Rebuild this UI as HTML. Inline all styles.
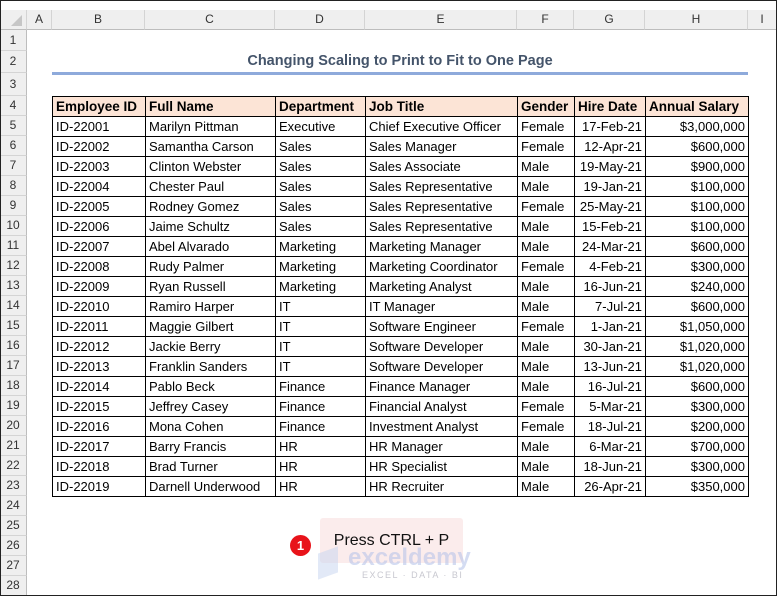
<!DOCTYPE html>
<html><head><style>
*{margin:0;padding:0;box-sizing:border-box}
body{width:777px;height:596px;background:#fff;font-family:"Liberation Sans",sans-serif;position:relative;overflow:hidden}
.frame{position:absolute;left:0;top:0;width:777px;height:596px;border:1px solid #222}
.ch{position:absolute;top:10px;height:20px;background:#efefef;border-right:1px solid #d4d4d4;border-bottom:1px solid #bdbdbd;font-size:12px;color:#333;text-align:center;line-height:19px}
.rh{position:absolute;left:0;width:27px;background:#efefef;border-bottom:1px solid #d4d4d4;border-right:1px solid #bdbdbd;font-size:12px;color:#333;text-align:center}
table{position:absolute;left:52px;top:96px;border-collapse:collapse;font-size:13px;color:#000}
td{border:1px solid #000;height:20px;padding:0 3px;white-space:nowrap;line-height:18px}
tr.h td{background:#fce4d6;font-weight:bold;font-size:13.5px}
td.r{text-align:right}
</style></head><body>
<div class="ch" style="left:0;width:27px"><svg width="27" height="19"><polygon points="22,5 22,16 11,16" fill="#c6c6c6"/></svg></div>
<div class="ch" style="left:27px;width:25px">A</div>
<div class="ch" style="left:52px;width:93px">B</div>
<div class="ch" style="left:145px;width:130px">C</div>
<div class="ch" style="left:275px;width:90px">D</div>
<div class="ch" style="left:365px;width:152px">E</div>
<div class="ch" style="left:517px;width:57px">F</div>
<div class="ch" style="left:574px;width:71px">G</div>
<div class="ch" style="left:645px;width:103px">H</div>
<div class="ch" style="left:748px;width:29px">I</div>
<div class="rh" style="top:30px;height:21px;line-height:20px">1</div>
<div class="rh" style="top:51px;height:22px;line-height:21px">2</div>
<div class="rh" style="top:73px;height:23px;line-height:22px">3</div>
<div id="rows"></div>
<script>
var h='';for(var i=4;i<=28;i++){var t=96+(i-4)*20;h+='<div class="rh" style="top:'+t+'px;height:20px;line-height:19px">'+i+'</div>';}
document.getElementById('rows').innerHTML=h;
</script>
<div style="position:absolute;left:52px;top:51px;width:696px;text-align:center;font-weight:bold;font-size:14.5px;color:#44546a;line-height:20px">Changing Scaling to Print to Fit to One Page</div>
<div style="position:absolute;left:52px;top:72px;width:696px;height:3px;background:#8eaadb"></div>
<table>
<colgroup><col style="width:93px"><col style="width:130px"><col style="width:90px"><col style="width:152px"><col style="width:57px"><col style="width:71px"><col style="width:103px"></colgroup>
<tr class="h"><td>Employee ID</td><td>Full Name</td><td>Department</td><td>Job Title</td><td>Gender</td><td>Hire Date</td><td>Annual Salary</td></tr>
<tr><td>ID-22001</td><td>Marilyn Pittman</td><td>Executive</td><td>Chief Executive Officer</td><td>Female</td><td class="r">17-Feb-21</td><td class="r">$3,000,000</td></tr>
<tr><td>ID-22002</td><td>Samantha Carson</td><td>Sales</td><td>Sales Manager</td><td>Female</td><td class="r">12-Apr-21</td><td class="r">$600,000</td></tr>
<tr><td>ID-22003</td><td>Clinton Webster</td><td>Sales</td><td>Sales Associate</td><td>Male</td><td class="r">19-May-21</td><td class="r">$900,000</td></tr>
<tr><td>ID-22004</td><td>Chester Paul</td><td>Sales</td><td>Sales Representative</td><td>Male</td><td class="r">19-Jan-21</td><td class="r">$100,000</td></tr>
<tr><td>ID-22005</td><td>Rodney Gomez</td><td>Sales</td><td>Sales Representative</td><td>Female</td><td class="r">25-May-21</td><td class="r">$100,000</td></tr>
<tr><td>ID-22006</td><td>Jaime Schultz</td><td>Sales</td><td>Sales Representative</td><td>Male</td><td class="r">15-Feb-21</td><td class="r">$100,000</td></tr>
<tr><td>ID-22007</td><td>Abel Alvarado</td><td>Marketing</td><td>Marketing Manager</td><td>Male</td><td class="r">24-Mar-21</td><td class="r">$600,000</td></tr>
<tr><td>ID-22008</td><td>Rudy Palmer</td><td>Marketing</td><td>Marketing Coordinator</td><td>Female</td><td class="r">4-Feb-21</td><td class="r">$300,000</td></tr>
<tr><td>ID-22009</td><td>Ryan Russell</td><td>Marketing</td><td>Marketing Analyst</td><td>Male</td><td class="r">16-Jun-21</td><td class="r">$240,000</td></tr>
<tr><td>ID-22010</td><td>Ramiro Harper</td><td>IT</td><td>IT Manager</td><td>Male</td><td class="r">7-Jul-21</td><td class="r">$600,000</td></tr>
<tr><td>ID-22011</td><td>Maggie Gilbert</td><td>IT</td><td>Software Engineer</td><td>Female</td><td class="r">1-Jan-21</td><td class="r">$1,050,000</td></tr>
<tr><td>ID-22012</td><td>Jackie Berry</td><td>IT</td><td>Software Developer</td><td>Male</td><td class="r">30-Jan-21</td><td class="r">$1,020,000</td></tr>
<tr><td>ID-22013</td><td>Franklin Sanders</td><td>IT</td><td>Software Developer</td><td>Male</td><td class="r">13-Jun-21</td><td class="r">$1,020,000</td></tr>
<tr><td>ID-22014</td><td>Pablo Beck</td><td>Finance</td><td>Finance Manager</td><td>Male</td><td class="r">16-Jul-21</td><td class="r">$600,000</td></tr>
<tr><td>ID-22015</td><td>Jeffrey Casey</td><td>Finance</td><td>Financial Analyst</td><td>Female</td><td class="r">5-Mar-21</td><td class="r">$300,000</td></tr>
<tr><td>ID-22016</td><td>Mona Cohen</td><td>Finance</td><td>Investment Analyst</td><td>Female</td><td class="r">18-Jul-21</td><td class="r">$200,000</td></tr>
<tr><td>ID-22017</td><td>Barry Francis</td><td>HR</td><td>HR Manager</td><td>Male</td><td class="r">6-Mar-21</td><td class="r">$700,000</td></tr>
<tr><td>ID-22018</td><td>Brad Turner</td><td>HR</td><td>HR Specialist</td><td>Male</td><td class="r">18-Jun-21</td><td class="r">$300,000</td></tr>
<tr><td>ID-22019</td><td>Darnell Underwood</td><td>HR</td><td>HR Recruiter</td><td>Male</td><td class="r">26-Apr-21</td><td class="r">$350,000</td></tr>
</table>
<div style="position:absolute;left:320px;top:518px;width:143px;height:45px;background:#fbecec;border-radius:3px;text-align:center;line-height:46px;font-size:16px;color:#111">Press CTRL + P</div>
<div style="position:absolute;left:290px;top:535px;width:21px;height:21px;border-radius:50%;background:#e8131a;color:#fff;font-weight:bold;font-size:13px;text-align:center;line-height:21px">1</div>
<div style="position:absolute;left:318px;top:550px;width:20px;height:26px;background:#c6d3ef;opacity:.5;transform:skewY(-20deg)"></div>
<div style="position:absolute;left:348px;top:545px;font-size:24px;font-weight:bold;color:#b9c5ea;opacity:.6;line-height:26px">exceldemy</div>
<div style="position:absolute;left:362px;top:570px;font-size:9px;color:#c8c8d0;letter-spacing:1.5px">EXCEL · DATA · BI</div>
<div class="frame"></div>
</body></html>
